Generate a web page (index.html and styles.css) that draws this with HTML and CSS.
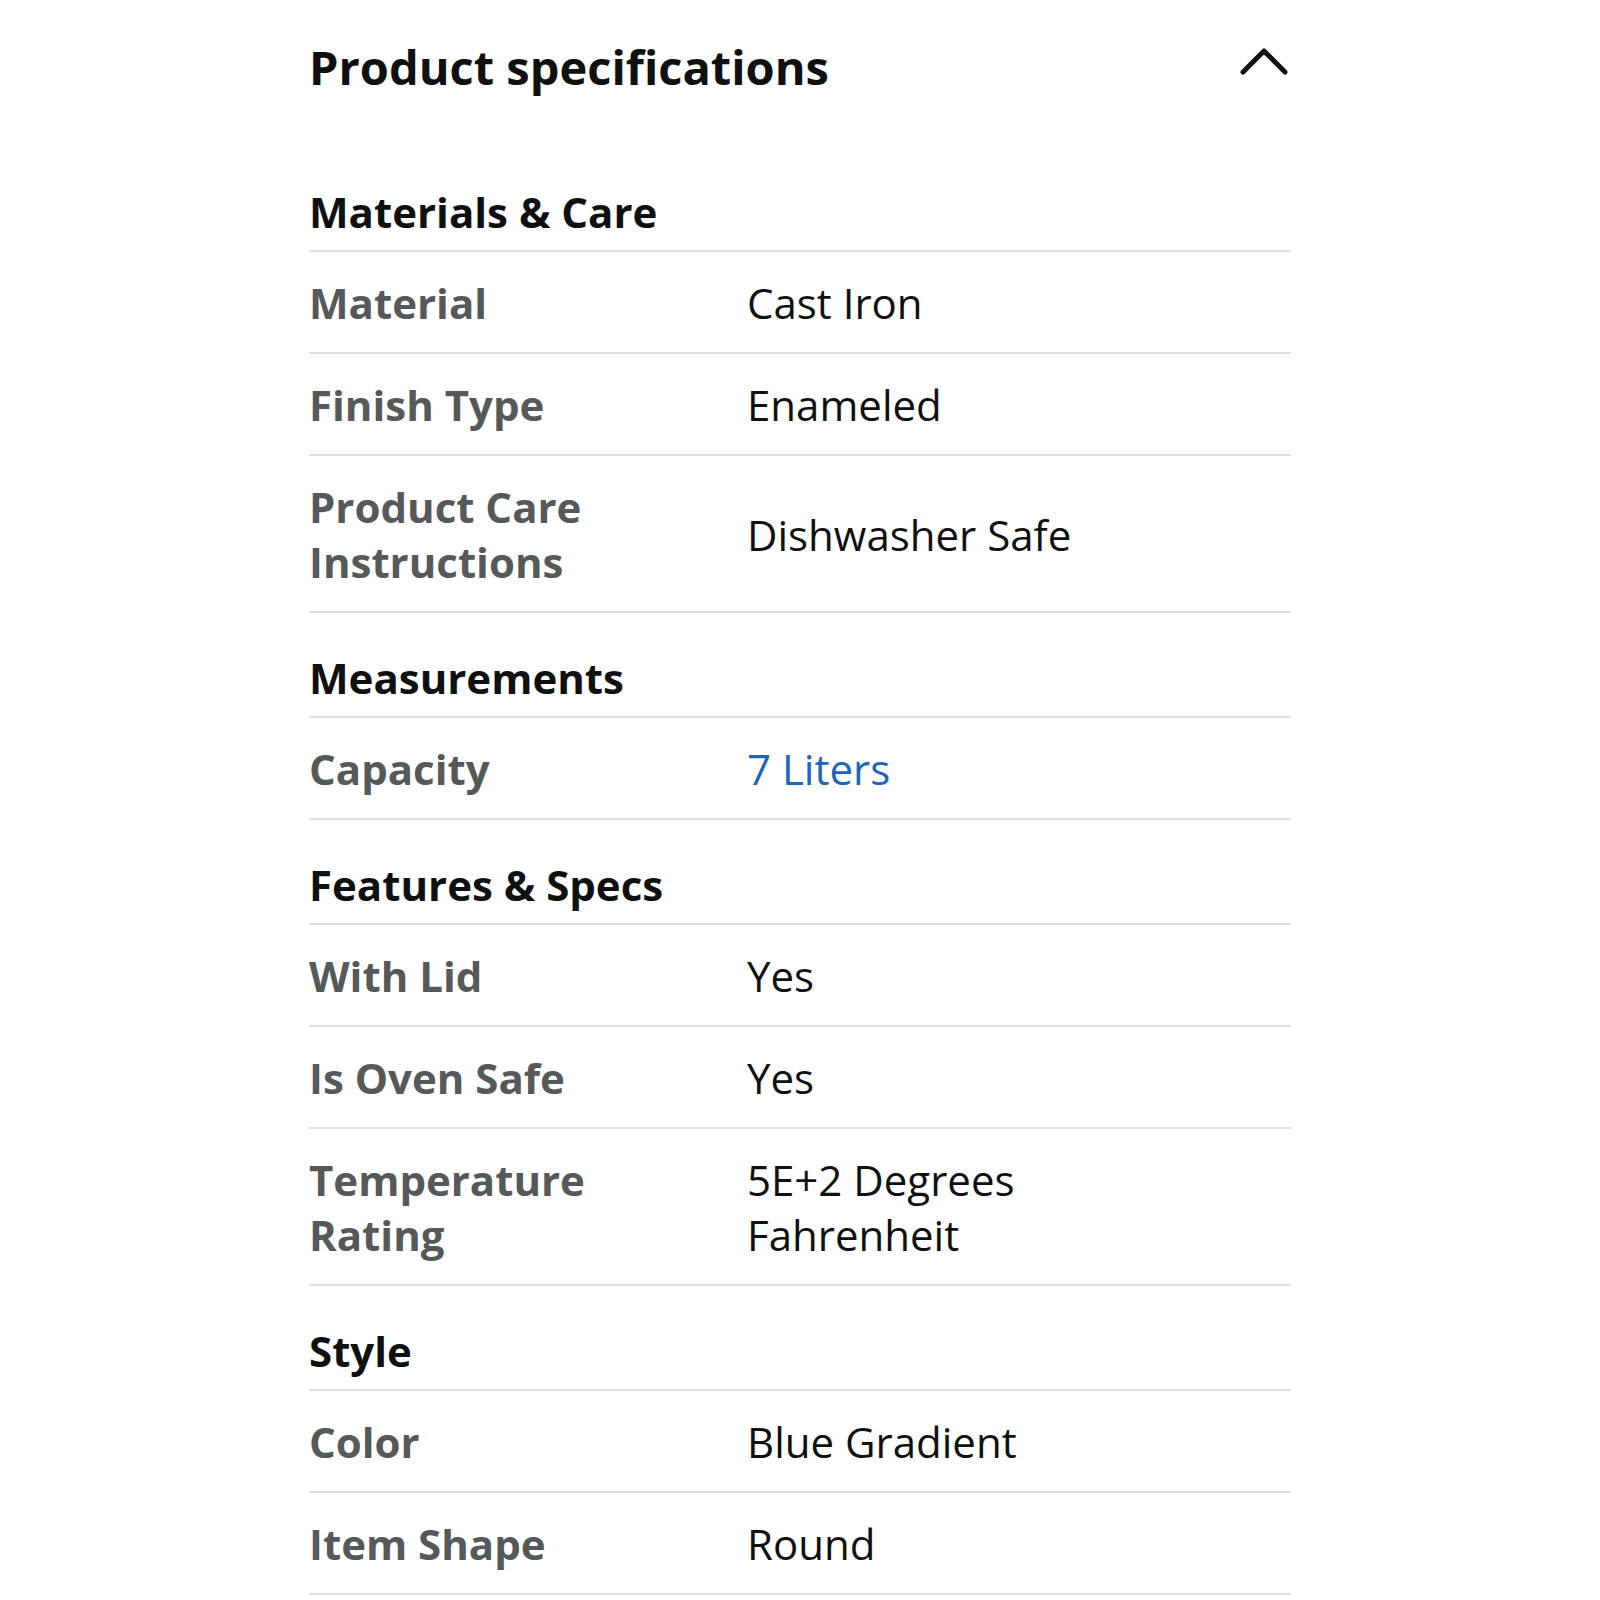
FILE: index.html
```html
<!DOCTYPE html>
<html>
  <head>
    <meta charset="utf-8"/>
    <title>Product specifications</title>
    <link rel="stylesheet" href="styles.css">
  </head>
  <body>
  <div class="specs">
    <div class="top">
      <h1 class="title">Product specifications</h1>
      <svg class="chevron" width="48" height="48" viewBox="0 0 48 48">
        <polyline points="3,29 24,8 45,29" fill="none" stroke="#0f1111" stroke-width="5" stroke-linecap="round" stroke-linejoin="round"/>
      </svg>
    </div>

    <h2 class="group">Materials &amp; Care</h2>
    <div class="row">
      <div class="label">Material</div>
      <div class="value">Cast Iron</div>
    </div>
    <div class="row">
      <div class="label">Finish Type</div>
      <div class="value">Enameled</div>
    </div>
    <div class="row">
      <div class="label">Product Care<br>Instructions</div>
      <div class="value">Dishwasher Safe</div>
    </div>

    <h2 class="group">Measurements</h2>
    <div class="row">
      <div class="label">Capacity</div>
      <div class="value"><a class="link" href="#">7 Liters</a></div>
    </div>

    <h2 class="group">Features &amp; Specs</h2>
    <div class="row">
      <div class="label">With Lid</div>
      <div class="value">Yes</div>
    </div>
    <div class="row">
      <div class="label">Is Oven Safe</div>
      <div class="value">Yes</div>
    </div>
    <div class="row">
      <div class="label">Temperature<br>Rating</div>
      <div class="value">5E+2 Degrees<br>Fahrenheit</div>
    </div>

    <h2 class="group">Style</h2>
    <div class="row">
      <div class="label">Color</div>
      <div class="value">Blue Gradient</div>
    </div>
    <div class="row">
      <div class="label">Item Shape</div>
      <div class="value">Round</div>
    </div>
  </div>
  </body>
</html>
```

FILE: styles.css
```css
body{
  margin: 0;
  background: #fff;
  color: #0f1111;
  font-family: "Open Sans", "Noto Sans", sans-serif;
}
.specs{
  width: 982px;
  margin-left: 309px;
}
.top{
  display: flex;
  justify-content: space-between;
  align-items: center;
  padding: 32px 0 45px;
}
.title{
  margin: 0;
  font-size: 47px;
  line-height: 70px;
  font-weight: 700;
}
.chevron{
  display: block;
  margin-right: 3px;
}
.group{
  margin: 0;
  padding: 37px 0 11px;
  font-size: 42px;
  line-height: 55px;
  font-weight: 700;
  border-bottom: solid #dcdfdf 2px;
}
.row{
  display: grid;
  grid-template-columns: 438px 1fr;
  align-items: center;
  padding: 23px 0 22px;
  font-size: 42px;
  line-height: 55px;
  border-bottom: solid #dcdfdf 2px;
}
.label{
  font-weight: 700;
  color: #565959;
}
.value{
  color: #0f1111;
}
.link{
  color: #1e66bd;
  text-decoration: none;
}
```
